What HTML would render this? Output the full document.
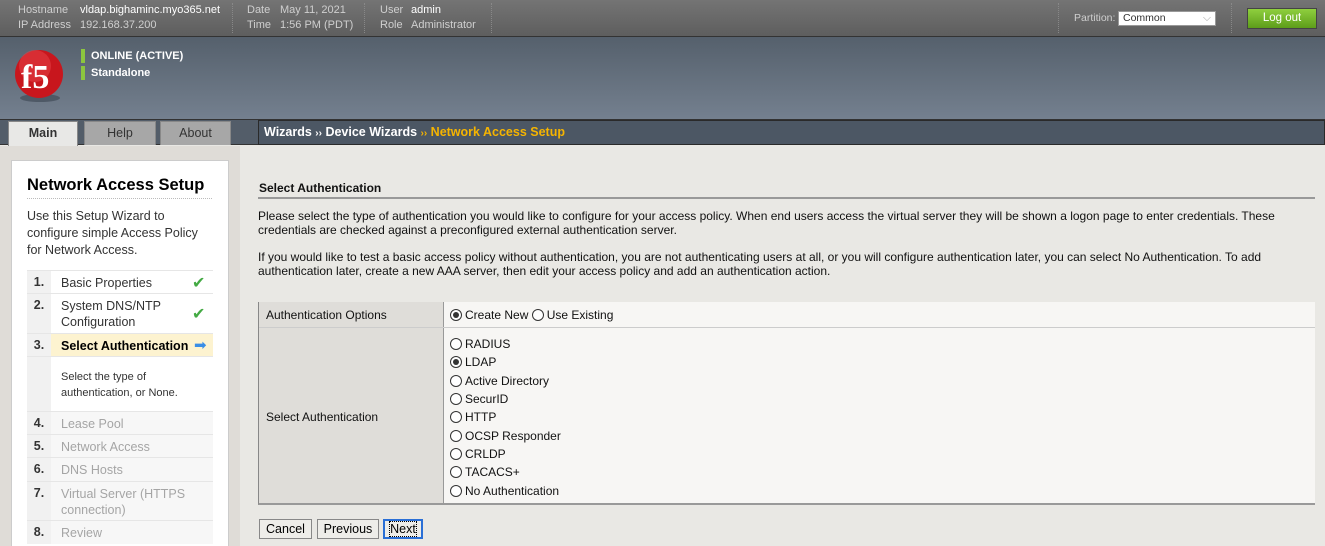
<!DOCTYPE html>
<html><head><style>
*{margin:0;padding:0;box-sizing:border-box}
html,body{width:1325px;height:546px;overflow:hidden}
body{font-family:"Liberation Sans",Arial,sans-serif;font-size:12px;background:#e9e8e4;position:relative}
.a{position:absolute}
.top{left:0;top:0;width:1325px;height:37px;background:linear-gradient(#747474,#5e5e5e);border-bottom:1px solid #333}
.top .a{color:#cfcfcf;font-size:11px}
.top b{font-weight:normal;color:#fff}
.ban{left:0;top:37px;width:1325px;height:83px;background:linear-gradient(#55606c,#74808f);border-bottom:1px solid #333}
.tabs{left:0;top:120px;width:1325px;height:25px;background:#535d69;border-bottom:1px solid #333}
.tab{top:121px;height:24px;text-align:center;line-height:22px;font-size:12.5px;color:#333;background:#a7a7a7;border:1px solid #888;border-bottom:none}
.side{left:11px;top:160px;width:218px;height:400px;background:#fff;border:1px solid #ccc}
.row{left:27px;width:186px;border-top:1px solid #e6e6e6;font-size:12.5px}
.row .n{position:absolute;left:0;top:0;width:24px;height:100%;background:#f1f1f1;font-weight:bold;text-align:center;padding-top:4px;color:#333}
.row .t{position:absolute;left:34px;top:4px;color:#333;line-height:16px}
.f .t{color:#a5a5a5}.f{background:#f7f7f7}
.btn{top:519px;height:20px;background:#eeede9;border:1px solid #888;font-size:12.5px;text-align:center;line-height:18px}
.radio{display:inline-block;width:12px;height:12px;border:1px solid #333;border-radius:50%;vertical-align:-2px;margin-right:3px;background:#fff;position:relative}
.radio.on:after{content:"";position:absolute;left:2px;top:2px;width:6px;height:6px;border-radius:50%;background:#333}
.opt{left:450px;font-size:12px;color:#111}
</style></head><body>
<div class="a top">
<div class="a" style="left:18px;top:4px">Hostname</div><div class="a" style="left:80px;top:4px"><b>vldap.bighaminc.myo365.net</b></div>
<div class="a" style="left:18px;top:19px">IP Address</div><div class="a" style="left:80px;top:19px">192.168.37.200</div>
<div class="a" style="left:232px;top:3px;height:30px;border-left:1px dotted #888"></div>
<div class="a" style="left:247px;top:4px">Date</div><div class="a" style="left:280px;top:4px">May 11, 2021</div>
<div class="a" style="left:247px;top:19px">Time</div><div class="a" style="left:280px;top:19px">1:56 PM (PDT)</div>
<div class="a" style="left:364px;top:3px;height:30px;border-left:1px dotted #888"></div>
<div class="a" style="left:380px;top:4px">User</div><div class="a" style="left:411px;top:4px"><b>admin</b></div>
<div class="a" style="left:380px;top:19px">Role</div><div class="a" style="left:411px;top:19px">Administrator</div>
<div class="a" style="left:491px;top:3px;height:30px;border-left:1px dotted #888"></div>
<div class="a" style="left:1058px;top:3px;height:30px;border-left:1px dotted #888"></div>
<div class="a" style="left:1074px;top:12px;font-size:10.5px">Partition:</div>
<div class="a" style="left:1118px;top:11px;width:98px;height:15px;background:#fff;border:1px solid #999;color:#333;font-size:10.5px;padding-left:4px;line-height:13px">Common<span style="position:absolute;right:4px;top:0;color:#aaa">⌵</span></div>
<div class="a" style="left:1231px;top:3px;height:30px;border-left:1px dotted #888"></div>
<div class="a" style="left:1247px;top:8px;width:70px;height:21px;background:linear-gradient(#8fcf3e,#5d9d1a);border:1px solid #444;color:#fff;text-align:center;line-height:19px;font-size:11.5px">Log out</div>
</div>
<div class="a ban">
<svg class="a" style="left:13px;top:11px" width="54" height="56"><ellipse cx="27" cy="50" rx="20" ry="4" fill="#3a4450" opacity=".6"/><circle cx="26" cy="26" r="24" fill="#c8161d"/><circle cx="22" cy="18" r="16" fill="#e8434a" opacity=".5"/><text x="8" y="40" font-family="Liberation Serif" font-weight="bold" font-size="34" fill="#fff">f5</text></svg>
<div class="a" style="left:81px;top:12px;width:4px;height:14px;background:#8cc63f"></div>
<div class="a" style="left:81px;top:29px;width:4px;height:14px;background:#8cc63f"></div>
<div class="a" style="left:91px;top:13px;color:#fff;font-weight:bold;font-size:11px">ONLINE (ACTIVE)</div>
<div class="a" style="left:91px;top:30px;color:#fff;font-weight:bold;font-size:11px">Standalone</div>
</div>
<div class="a tabs"></div>
<div class="a tab" style="left:8px;width:70px;background:#e8e8e6;font-weight:bold;height:25px">Main</div>
<div class="a tab" style="left:84px;width:72px">Help</div>
<div class="a tab" style="left:160px;width:71px">About</div>
<div class="a" style="left:258px;top:120px;width:1067px;height:25px;background:#4c5764;border:1px solid #2a2a2a;color:#fff;font-weight:bold;font-size:12.5px;line-height:22px;padding-left:5px">Wizards <span style="font-size:10px">››</span> Device Wizards <span style="color:#f5b400"><span style="font-size:10px">››</span> Network Access Setup</span></div>
<div class="a" style="left:0;top:146px;width:240px;height:400px;background:#dfdcd7"></div>
<div class="a side"></div>
<div class="a" style="left:27px;top:176px;font-size:16.5px;font-weight:bold;color:#000">Network Access Setup</div>
<div class="a" style="left:27px;top:198px;width:185px;border-top:1px dotted #bbb"></div>
<div class="a" style="left:27px;top:208px;font-size:12.5px;line-height:17px;color:#333">Use this Setup Wizard to<br>configure simple Access Policy<br>for Network Access.</div>
<div class="a row" style="top:270px;height:23px"><div class="n">1.</div><div class="t">Basic Properties</div><div class="a" style="left:165px;top:2px;color:#4a4;font-size:16px">✔</div></div>
<div class="a row" style="top:293px;height:40px"><div class="n">2.</div><div class="t">System DNS/NTP<br>Configuration</div><div class="a" style="left:165px;top:10px;color:#4a4;font-size:16px">✔</div></div>
<div class="a row" style="top:333px;height:23px;background:#fdf3d0"><div class="n">3.</div><div class="t" style="font-weight:bold;color:#000">Select Authentication</div><div class="a" style="left:167px;top:2px;color:#3a8ee6;font-size:15px">➡</div></div>
<div class="a row" style="top:356px;height:55px;background:#fff"><div class="n" style="background:#f1f1f1"></div><div class="t" style="top:12px;font-size:11px;line-height:16px">Select the type of<br>authentication, or None.</div></div>
<div class="a row f" style="top:411px;height:23px"><div class="n">4.</div><div class="t">Lease Pool</div></div>
<div class="a row f" style="top:434px;height:23px"><div class="n">5.</div><div class="t">Network Access</div></div>
<div class="a row f" style="top:457px;height:24px"><div class="n">6.</div><div class="t">DNS Hosts</div></div>
<div class="a row f" style="top:481px;height:39px"><div class="n">7.</div><div class="t">Virtual Server (HTTPS<br>connection)</div></div>
<div class="a row f" style="top:520px;height:24px"><div class="n">8.</div><div class="t">Review</div></div>

<div class="a" style="left:259px;top:181px;font-weight:bold;color:#111">Select Authentication</div>
<div class="a" style="left:258px;top:197px;width:1057px;border-top:2px solid #999"></div>
<div class="a" style="left:258px;top:209px;width:1060px;line-height:14px;color:#111">Please select the type of authentication you would like to configure for your access policy. When end users access the virtual server they will be shown a logon page to enter credentials. These credentials are checked against a preconfigured external authentication server.</div>
<div class="a" style="left:258px;top:250px;width:1060px;line-height:14px;color:#111">If you would like to test a basic access policy without authentication, you are not authenticating users at all, or you will configure authentication later, you can select No Authentication. To add authentication later, create a new AAA server, then edit your access policy and add an authentication action.</div>
<div class="a" style="left:258px;top:302px;width:1057px;height:203px;background:#f7f6f4;border-left:1px solid #888;border-bottom:2px solid #999"></div>
<div class="a" style="left:259px;top:302px;width:185px;height:201px;background:#dfddd9;border-right:1px solid #999"></div>
<div class="a" style="left:259px;top:327px;width:1056px;border-top:1px solid #ccc"></div>
<div class="a" style="left:266px;top:308px;color:#111">Authentication Options</div>
<div class="a" style="left:266px;top:410px;color:#111">Select Authentication</div>
<div class="a opt" style="top:308px"><span class="radio on"></span>Create New <span class="radio"></span>Use Existing</div>
<div class="a opt" style="top:337px"><span class="radio"></span>RADIUS</div>
<div class="a opt" style="top:355px"><span class="radio on"></span>LDAP</div>
<div class="a opt" style="top:374px"><span class="radio"></span>Active Directory</div>
<div class="a opt" style="top:392px"><span class="radio"></span>SecurID</div>
<div class="a opt" style="top:410px"><span class="radio"></span>HTTP</div>
<div class="a opt" style="top:429px"><span class="radio"></span>OCSP Responder</div>
<div class="a opt" style="top:447px"><span class="radio"></span>CRLDP</div>
<div class="a opt" style="top:465px"><span class="radio"></span>TACACS+</div>
<div class="a opt" style="top:484px"><span class="radio"></span>No Authentication</div>
<div class="a btn" style="left:259px;width:53px">Cancel</div>
<div class="a btn" style="left:317px;width:62px">Previous</div>
<div class="a btn" style="left:383px;width:40px;border:2px solid #2a6fd6;line-height:16px"><span style="outline:1px dotted #000">Next</span></div>
</body></html>
